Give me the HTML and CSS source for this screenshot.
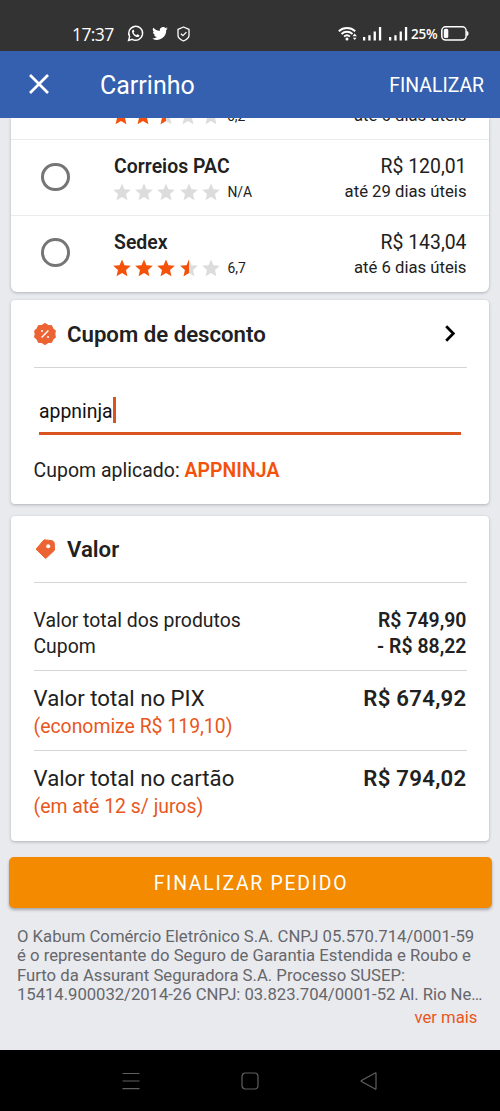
FILE: index.html
```html
<!DOCTYPE html>
<html lang="pt-BR">
<head>
<meta charset="utf-8">
<title>Carrinho</title>
<link rel="stylesheet" href="styles.css">
</head>
<body>
<svg class="defs" aria-hidden="true">
  <symbol id="star" viewBox="1.8 1.500 20.400 20.400"><path d="M12 17.270 18.180 21l-1.640-7.030L22 9.240l-7.190-.61L12 2 9.190 8.630 2 9.240l5.460 4.730L5.820 21z"/></symbol>
  <symbol id="half" viewBox="1.8 1.500 20.400 20.400"><path d="M12 17.270V2L9.190 8.630 2 9.240l5.460 4.730L5.820 21z"/></symbol>
  <symbol id="signal" viewBox="0 0 19 15"><path d="M0 11h2.300v3.500H0zM5.300 9.300h2.300v5.200H5.300zM10.600 5.500h2.300v9h-2.300zM15.900 1h2.300v13.500h-2.300z"/></symbol>
</svg>
<div class="screen">
  <div class="status">
    <span class="clock">17:37</span>
    <svg class="whatsapp" viewBox="0 0 24 24"><path fill="none" stroke="#fff" stroke-width="2" d="M2.200 21.800l1.500-5.300a9.800 9.800 0 1 1 3.700 3.700z"/><path fill="#fff" d="M8.600 6.700c-1 .3-1.700 1.400-1.500 2.700.5 3.600 4 7.200 7.700 7.600 1.400.1 2.500-.7 2.700-2l-.1-.7-2.500-1.300-.6.100-1 1.200c-1.900-.7-3.200-2-4-3.800l.9-1.100.1-.6-1.100-2.100z"/></svg>
    <svg class="twitter" viewBox="0 0 24 20"><path fill="#fff" d="M24 2.400a9.800 9.800 0 0 1-2.800.8A4.900 4.900 0 0 0 23.300.5a9.800 9.800 0 0 1-3.100 1.200 4.900 4.900 0 0 0-8.400 4.500A14 14 0 0 1 1.700 1a4.900 4.900 0 0 0 1.500 6.600A4.900 4.900 0 0 1 1 7v.1a4.900 4.900 0 0 0 3.900 4.800 4.900 4.900 0 0 1-2.200.1 4.900 4.900 0 0 0 4.600 3.400A9.900 9.900 0 0 1 0 17.500a14 14 0 0 0 21.500-12.400V4.500A10 10 0 0 0 24 2.400z"/></svg>
    <svg class="shield" viewBox="0 0 13 16"><path fill="none" stroke="#fff" stroke-width="1.300" stroke-linejoin="round" d="M6.500 1 12 3.300v6.200c0 2.700-3.200 4.500-5.500 5.500C4.200 14 1 12.200 1 9.500V3.300zM3.900 7.700l2 1.900 3.500-3.500"/></svg>
    <span class="spacer"></span>
    <svg class="wifi" viewBox="0 0 19 15"><g fill="none" stroke="#fff" stroke-width="1.900"><path d="M.8 5.200a12 12 0 0 1 16.400 0"/><path d="M3.500 8a8 8 0 0 1 11 0"/><path d="M6.100 10.600a4.300 4.300 0 0 1 5.800 0"/></g><circle cx="9" cy="13" r="1.500" fill="#fff"/><path fill="#fff" d="M14.500 10.200 16.700 7.600l2.200 2.600zM14.900 11.800h3.600l-1.800 2.200z"/></svg>
    <svg class="signal" fill="#fff"><use href="#signal"/></svg>
    <svg class="signal signal-b" fill="#fff"><use href="#signal"/></svg>
    <span class="percent">25%</span>
    <svg class="battery" viewBox="0 0 28 15"><rect x=".8" y=".8" width="24.300" height="13.300" rx="3.800" fill="none" stroke="#fff" stroke-width="1.500"/><rect x="2.800" y="2.800" width="4.500" height="9.300" rx="1.700" fill="#fff"/><path fill="#fff" d="M25.700 5c1.300.2 1.800 1 1.800 2.500s-.5 2.300-1.800 2.500z"/></svg>
  </div>
  <header class="appbar">
    <svg class="close" viewBox="0 0 20 20"><path d="M1 1l18 18M19 1 1 19" stroke="#fff" stroke-width="2.700"/></svg>
    <h1>Carrinho</h1>
    <span class="done">FINALIZAR</span>
  </header>
  <main class="content">
    <section class="card shipping">
      <div class="option scrolled">
        <div class="rating"><svg class="on"><use href="#star"/></svg><svg class="on"><use href="#star"/></svg><svg><use href="#star"/><use class="on" href="#half"/></svg><svg><use href="#star"/></svg><svg><use href="#star"/></svg><span>6,2</span></div>
        <div class="cost"><small>até 6 dias úteis</small></div>
      </div>
      <div class="option">
        <span class="radio"></span>
        <div class="carrier"><b>Correios PAC</b>
          <div class="rating"><svg><use href="#star"/></svg><svg><use href="#star"/></svg><svg><use href="#star"/></svg><svg><use href="#star"/></svg><svg><use href="#star"/></svg><span>N/A</span></div>
        </div>
        <div class="cost"><span>R$ 120,01</span><small>até 29 dias úteis</small></div>
      </div>
      <div class="option">
        <span class="radio"></span>
        <div class="carrier"><b>Sedex</b>
          <div class="rating"><svg class="on"><use href="#star"/></svg><svg class="on"><use href="#star"/></svg><svg class="on"><use href="#star"/></svg><svg><use href="#star"/><use class="on" href="#half"/></svg><svg><use href="#star"/></svg><span>6,7</span></div>
        </div>
        <div class="cost"><span>R$ 143,04</span><small>até 6 dias úteis</small></div>
      </div>
    </section>
    <section class="card coupon">
      <div class="card-head">
        <svg class="badge" viewBox="0 0 22 22"><path fill="#ec6433" stroke="#ec6433" stroke-width="2.400" stroke-linejoin="round" d="M11 1.300l2.700 1.800 3.300.1 1.400 2.900 2.300 2-.6 2.900.6 2.900-2.300 2-1.400 2.900-3.300.1L11 20.700l-2.700-1.800-3.300-.1-1.400-2.900-2.300-2 .6-2.900-.6-2.900 2.300-2L5 3.200l3.300-.1z"/><path d="M7.600 14.400l6.800-6.800" stroke="#fff" stroke-width="1.400"/><circle cx="8" cy="8" r="1" fill="#fff"/><circle cx="14" cy="14" r="1" fill="#fff"/></svg>
        <h2>Cupom de desconto</h2>
        <svg class="chevron" viewBox="0 0 10 17"><path d="M1.200 1.200 8.300 8.500l-7.100 7.300" fill="none" stroke="#000" stroke-width="2.700"/></svg>
      </div>
      <div class="field"><span>appninja</span><i class="caret"></i></div>
      <p class="applied">Cupom aplicado: <b>APPNINJA</b></p>
    </section>
    <section class="card totals">
      <div class="card-head">
        <svg class="tag" viewBox="0 0 20 20"><path fill="#ec6433" stroke="#ec6433" stroke-width="1" stroke-linejoin="round" d="M1 10.200 9 .8l8.300.9 1.900 1.700.3 7.800L10.700 19.500z"/><circle cx="13.200" cy="7.200" r="2" fill="#fff"/></svg>
        <h2>Valor</h2>
      </div>
      <div class="lines">
        <div class="line"><span>Valor total dos produtos</span><b>R$ 749,90</b></div>
        <div class="line"><span>Cupom</span><b>- R$ 88,22</b></div>
      </div>
      <div class="total"><div class="line"><span>Valor total no PIX</span><b>R$ 674,92</b></div><p>(economize R$ 119,10)</p></div>
      <div class="total"><div class="line"><span>Valor total no cartão</span><b>R$ 794,02</b></div><p>(em até 12 s/ juros)</p></div>
    </section>
    <div class="checkout">FINALIZAR PEDIDO</div>
    <p class="legal">O Kabum Comércio Eletrônico S.A. CNPJ 05.570.714/0001-59<br>é o representante do Seguro de Garantia Estendida e Roubo e<br>Furto da Assurant Seguradora S.A. Processo SUSEP:<br><span>15414.900032/2014-26 CNPJ: 03.823.704/0001-52 Al. Rio Ne…</span></p>
    <div class="more">ver mais</div>
  </main>
  <nav class="navbar">
    <svg viewBox="0 0 18 18"><path d="M.5 1.500h17M.5 9h17M.5 16.700h17"/></svg>
    <svg viewBox="0 0 18 18"><rect x="1" y="1" width="16" height="16" rx="3.500"/></svg>
    <svg viewBox="0 0 18 18"><path d="M16 1.400v15.200q0 .8-.8.400L1.500 9.600q-.8-.6 0-1.200L15.200 1q.8-.4.8.4z"/></svg>
  </nav>
</div>
</body>
</html>
```
FILE: styles.css
```css
* { box-sizing: border-box; margin: 0; }
body { font-family: Roboto, "Liberation Sans", sans-serif; color: #212121; background: #e9eaee; }
svg { display: block; flex: none; }
b, h2 { font-weight: 600; }
b { letter-spacing: .050px; }
.defs { width: 0; height: 0; position: absolute; }
.screen { width: 500px; height: 1111px; display: flex; flex-direction: column; overflow: hidden; }

.status { height: 51px; background: #333; color: #fff; display: flex; align-items: center; padding: 16px 31px 0 72px; flex: none; }
.clock { font: 400 17.500px/18px "Open Sans", sans-serif; width: 42px; letter-spacing: -.6px; }
.whatsapp { width: 17px; height: 17px; margin-left: 13px; }
.twitter { width: 16px; height: 13px; margin-left: 8px; }
.shield { width: 13px; height: 16px; margin-left: 9px; }
.spacer { flex: 1; }
.wifi { width: 19px; height: 15px; margin-right: 6px; }
.signal { width: 19px; height: 15px; }
.signal-b { margin-left: 7px; }
.percent { font: 600 13.500px/18px "Open Sans", sans-serif; margin: 0 4px 0 3px; width: 26px; white-space: nowrap; letter-spacing: -.2px; }
.battery { width: 28px; height: 15px; }

.appbar { height: 66.500px; background: #355faf; color: #fff; display: flex; align-items: center; padding: 0 16px 0 29px; flex: none; }
.close { width: 20px; height: 20px; }
h1 { font-size: 25px; font-weight: 400; margin-left: 51px; flex: 1; line-height: 30px; padding-top: 3px; }
.done { font-size: 19.400px; padding-top: 2px; }

.content { flex: 1; min-height: 0; overflow: hidden; background: #e9eaee; }
.card { margin: 0 11px; background: #fff; border-radius: 4px; box-shadow: 0 1px 3px rgba(40,45,55,.3); }
.shipping { height: 174.500px; border-radius: 0 0 6px 6px; }
.option { height: 76.500px; display: flex; align-items: center; border-bottom: 1.500px solid #e9ebed; padding: 0 22.500px 0 30px; }
.option:last-child { border-color: transparent; height: 75px; }
.option.scrolled { height: 22px; padding-left: 102.500px; justify-content: space-between; align-items: flex-end; padding-bottom: 11px; }
.radio { width: 28.500px; height: 28.500px; margin-bottom: 1px; border: 3px solid #757575; border-radius: 50%; }
.carrier { margin-left: 44.500px; flex: 1; padding-top: 4px; }
.carrier b { font-size: 19.400px; line-height: 26px; display: block; }
.rating { display: flex; gap: 4.400px; height: 24px; align-items: center; margin-left: -1.500px; fill: #dcdcdc; }
.rating svg { width: 18px; height: 18px; }
.rating .on { fill: #f4510b; }
.rating span { font-size: 13.900px; margin-left: 3px; }
.cost { display: flex; flex-direction: column; align-items: flex-end; padding-top: 4px; }
.cost span { font-size: 19.400px; line-height: 26px; }
.cost small { font-size: 16.700px; line-height: 24px; }

.coupon { margin-top: 8px; height: 204px; padding: 0 22px 0 22.500px; }
.card-head { height: 68px; display: flex; align-items: center; border-bottom: 1.500px solid #d3d5d8; }
.badge { width: 22px; height: 22px; }
h2 { font-size: 22.200px; margin-left: 11.500px; flex: 1; }
.chevron { width: 10px; height: 17px; margin-right: 12px; }
.field { margin: 26px 6px 0 5.500px; height: 41px; border-bottom: 3px solid #d9541e; display: flex; align-items: flex-start; font-size: 19.400px; line-height: 36px; color: #111; }
.caret { width: 3px; height: 26px; margin-top: 3px; background: #d9541e; }
.applied { font-size: 19.400px; line-height: 26px; margin-top: 23px; letter-spacing: .06px; }
.applied b { color: #f4510b; }

.totals { margin-top: 11.500px; height: 325px; padding: 0 22.500px; }
.totals .card-head { height: 67.500px; }
.tag { width: 20px; height: 20px; margin: 0 1px; }
.line { display: flex; justify-content: space-between; font-size: 19.400px; line-height: 26.400px; }
.lines { padding-top: 25px; height: 86.500px; }
.total { border-top: 1.500px solid #d3d5d8; height: 80px; padding-top: 13.500px; }
.total .line { font-size: 22.200px; line-height: 29px; }
.total b { letter-spacing: .260px; }
.total p { color: #e8571d; font-size: 19.400px; line-height: 27px; }

.checkout { margin: 16.500px 8.500px 0; height: 50.500px; border-radius: 5px; background: #f38a00; color: #fff; box-shadow: 0 2px 3px rgba(40,45,55,.35); text-align: center; font-size: 19.400px; line-height: 53px; letter-spacing: 1.740px; padding-left: 2px; }
.legal { margin: 19px 0 0 17px; font-size: 16.700px; line-height: 19.500px; color: #66676b; white-space: nowrap; }
.legal span { letter-spacing: -.040px; }
.more { color: #e8571d; font-size: 16.700px; line-height: 24px; text-align: right; margin: 1px 22.500px 0 0; }

.navbar { height: 61px; flex: none; background: #000; display: flex; justify-content: center; gap: 101px; padding-top: 21.500px; }
.navbar svg { width: 18px; height: 18px; fill: none; stroke: #606060; stroke-width: 1.200; }
```
